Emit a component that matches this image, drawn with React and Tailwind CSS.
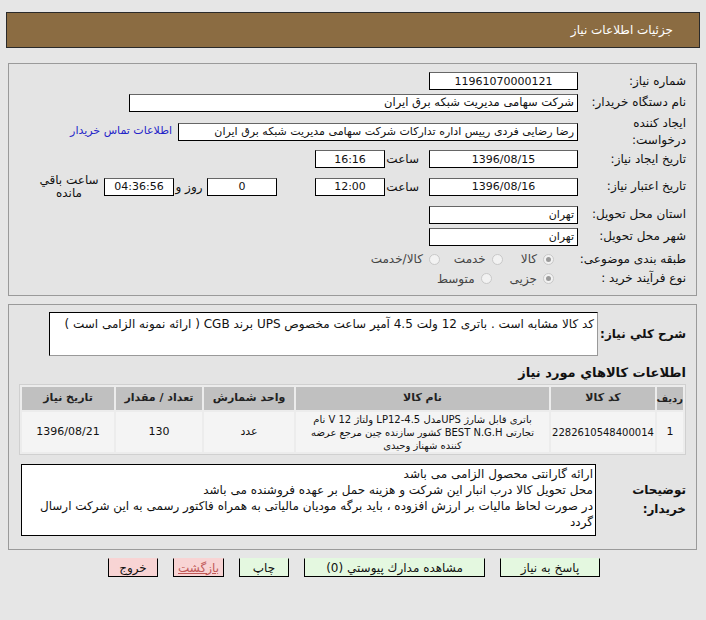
import React from 'react';

const Box = ({ className = '', children }) => (
  <div
    className={`flex h-[18px] items-center border border-black border-t-[#666] bg-white px-[3px] leading-none whitespace-nowrap ${className}`}
  >
    {children}
  </div>
);

const Radio = ({ checked }) => (
  <span className="inline-flex h-[11px] w-[11px] items-center justify-center rounded-full border border-[#c8c8c8] bg-[#f2f2f2]">
    {checked && <span className="h-[5px] w-[5px] rounded-full bg-[#9a9a9a]" />}
  </span>
);

const Label = ({ children, className = '' }) => (
  <div className={`w-[108px] shrink-0 text-right text-[12px] leading-[17px] ${className}`}>{children}</div>
);

const Btn = ({ children, w, pink, link }) => (
  <div
    className={`flex h-[19px] items-center justify-center border-x border-b border-black border-t border-t-transparent text-[12px] ${w} ${
      pink ? 'bg-[#f8d4d4]' : 'bg-[#e4f8e0]'
    }`}
  >
    <span className={link ? 'text-[#c05858] underline' : ''}>{children}</span>
  </div>
);

export default function App() {
  return (
    <div
      dir="rtl"
      className="min-h-[620px] w-[706px] bg-[#e6e6e6] pt-[12px] font-['DejaVu_Sans',sans-serif] text-[11px] text-[#111]"
    >
      {/* عنوان */}
      <div className="ml-[6px] mr-[6px] flex h-[36px] items-center border border-[#2a2a2a] bg-[#8b6c42] pr-[26px] text-[12px] text-white">
        جزئیات اطلاعات نیاز
      </div>

      {/* پنل اول */}
      <div className="ml-[8px] mr-[9px] mt-[15px] border border-[#9a9a9a] bg-[#e4e4e4] pb-[8px] pr-[10px] pt-[7px]">
        <div className="flex h-[20px] items-center">
          <Label>شماره نیاز:</Label>
          <Box className="w-[149px] justify-center">11961070000121</Box>
        </div>
        <div className="flex h-[23px] items-center">
          <Label>نام دستگاه خریدار:</Label>
          <Box className="w-[449px] text-[11.5px]">شرکت سهامی مدیریت شبکه برق ایران</Box>
        </div>
        <div className="flex h-[35px] items-center">
          <Label>
            ایجاد کننده
            <br />
            درخواست:
          </Label>
          <Box className="w-[400px]">رضا رضایی فردی رییس اداره تدارکات شرکت سهامی مدیریت شبکه برق ایران</Box>
          <span className="mr-[6px] text-[#2424c8]">اطلاعات تماس خریدار</span>
        </div>
        <div className="flex h-[20px] items-center">
          <Label>تاریخ ایجاد نیاز:</Label>
          <Box className="w-[149px] justify-center">1396/08/15</Box>
          <span className="w-[44px] pr-[10px] text-[12px]">ساعت</span>
          <Box className="w-[70px] justify-center">16:16</Box>
        </div>
        <div className="flex h-[35px] items-center">
          <Label>تاریخ اعتبار نیاز:</Label>
          <Box className="w-[149px] justify-center">1396/08/16</Box>
          <span className="w-[44px] pr-[10px] text-[12px]">ساعت</span>
          <Box className="w-[70px] justify-center">12:00</Box>
          <Box className="mr-[38px] w-[70px] justify-center">0</Box>
          <span className="mr-[3px] w-[30px] text-center text-[12px]">روز و</span>
          <Box className="w-[70px] justify-center bg-[#f0efd6]">04:36:56</Box>
          <span className="mr-[2px] w-[66px] text-center text-[12px] leading-[13px]">
            ساعت باقي
            <br />
            مانده
          </span>
        </div>
        <div className="flex h-[21px] items-center">
          <Label>استان محل تحویل:</Label>
          <Box className="w-[149px]">تهران</Box>
        </div>
        <div className="flex h-[23px] items-center">
          <Label>شهر محل تحویل:</Label>
          <Box className="w-[149px]">تهران</Box>
        </div>
        <div className="flex h-[22px] items-center">
          <Label>طبقه بندی موضوعی:</Label>
          <div className="mr-[24px] flex items-center gap-[6px] text-[12px] text-[#444]">
            <Radio checked />
            <span>کالا</span>
            <span className="mr-[6px]" />
            <Radio />
            <span>خدمت</span>
            <span className="mr-[2px]" />
            <Radio />
            <span>کالا/خدمت</span>
          </div>
        </div>
        <div className="flex h-[17px] items-center">
          <Label>نوع فرآیند خرید :</Label>
          <div className="mr-[24px] flex items-center gap-[6px] text-[12px] text-[#444]">
            <Radio checked />
            <span>جزیی</span>
            <span className="mr-[6px]" />
            <Radio />
            <span>متوسط</span>
          </div>
        </div>
      </div>

      {/* پنل دوم */}
      <div className="ml-[8px] mr-[9px] mt-[8px] border border-[#9a9a9a] bg-[#e4e4e4] pb-[13px] pr-[10px] pt-[7px]">
        <div className="flex items-center">
          <div className="w-[88px] shrink-0 text-[12px] font-bold">شرح کلي نیاز:</div>
          <div className="h-[44px] w-[549px] border border-black border-b-[#999] border-r-[#999] bg-white px-[3px] pt-[3px] text-[12px] leading-[16px]">
            کد کالا مشابه است . باتری 12 ولت 4.5 آمپر ساعت مخصوص UPS برند CGB ( ارائه نمونه الزامی است )
          </div>
        </div>

        <div className="mt-[8px] text-[13px] font-bold leading-[17px]">اطلاعات کالاهاي مورد نیاز</div>

        <table className="ml-[10px] mt-[3px] w-[665px] table-fixed border-separate border-spacing-[2px] border border-[#d0d0d0] bg-[#ececec] text-center">
          <thead>
            <tr className="h-[23px] bg-[#c0c0c0] text-[#222]">
              <th className="w-[26px] text-[10px] font-bold">ردیف</th>
              <th className="w-[104px] font-bold">کد کالا</th>
              <th className="w-[253px] font-bold">نام کالا</th>
              <th className="w-[90px] font-bold">واحد شمارش</th>
              <th className="w-[86px] font-bold">تعداد / مقدار</th>
              <th className="w-[92px] font-bold">تاریخ نیاز</th>
            </tr>
          </thead>
          <tbody>
            <tr className="h-[40px] bg-[#f4f4f4]">
              <td>1</td>
              <td className="text-[10px]">2282610548400014</td>
              <td className="text-[10px] leading-[13px]">
                باتری قابل شارژ UPSمدل LP12-4.5 ولتاژ 12 V نام
                <br />
                تجارتی BEST N.G.H کشور سازنده چین مرجع عرضه
                <br />
                کننده شهناز وحیدی
              </td>
              <td>عدد</td>
              <td>130</td>
              <td>1396/08/21</td>
            </tr>
          </tbody>
        </table>

        <div className="mt-[9px] flex items-center">
          <div className="w-[90px] shrink-0 text-[12px] font-bold leading-[19px]">
            توضیحات
            <br />
            خریدار:
          </div>
          <div className="h-[72px] w-[575px] border border-black bg-white px-[2px] pt-[1px] text-[12px] leading-[16px]">
            ارائه گارانتی محصول الزامی می باشد
            <br />
            محل تحویل کالا درب انبار این شرکت و هزینه حمل بر عهده فروشنده می باشد
            <br />
            <span className="whitespace-nowrap">
              در صورت لحاظ مالیات بر ارزش افزوده ، باید برگه مودیان مالیاتی به همراه فاکتور رسمی به این شرکت ارسال
            </span>
            <br />
            گردد
          </div>
        </div>
      </div>

      {/* دکمه ها */}
      <div className="mt-[8px] flex justify-center gap-[15px] pl-[2px]">
        <Btn w="w-[100px]">پاسخ به نیاز</Btn>
        <Btn w="w-[181px]">مشاهده مدارك پیوستي (0)</Btn>
        <Btn w="w-[50px]">چاپ</Btn>
        <Btn w="w-[51px]" pink link>
          بازگشت
        </Btn>
        <Btn w="w-[50px]" pink>
          خروج
        </Btn>
      </div>
    </div>
  );
}
